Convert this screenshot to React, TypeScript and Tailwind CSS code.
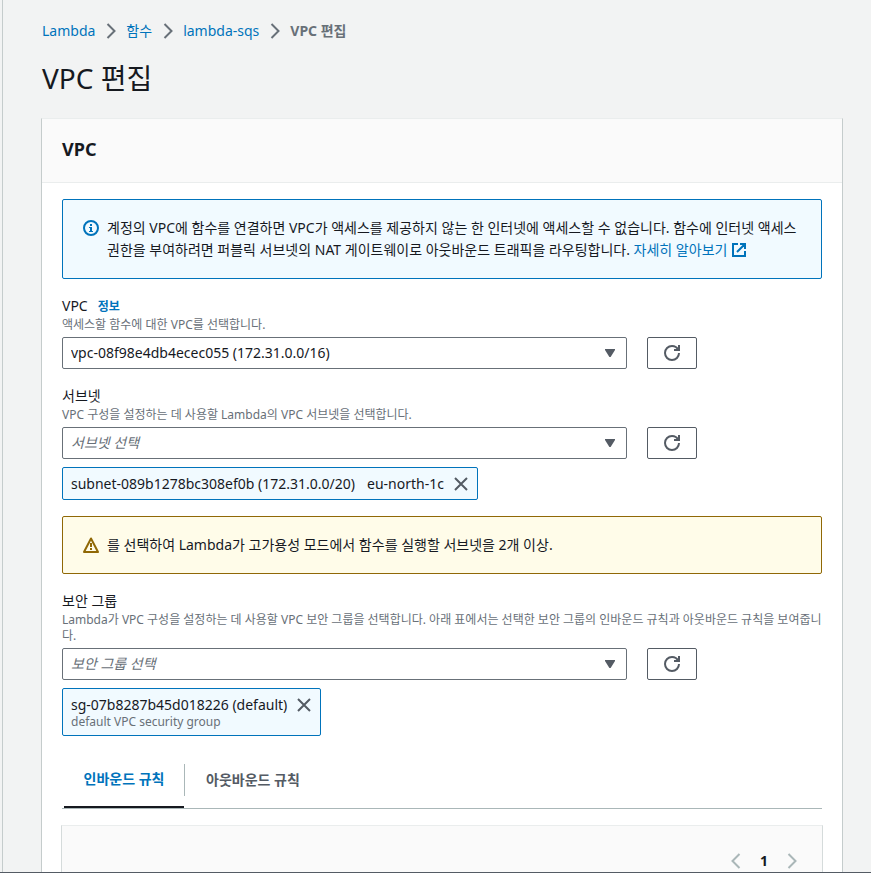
import type { ReactNode } from 'react';

function Chevron({ flip = false, className }: { flip?: boolean; className: string }) {
  return (
    <svg viewBox="0 0 16 16" className={className} fill="none" stroke="currentColor" strokeWidth="2" aria-hidden="true">
      <path d={flip ? 'M11.5 1 4.5 8l7 7' : 'M4.5 1l7 7-7 7'} />
    </svg>
  );
}

function RefreshButton({ label }: { label: string }) {
  return (
    <button
      type="button"
      aria-label={label}
      className="flex h-8 w-[50px] shrink-0 items-center justify-center rounded-xs border border-[#545b64] bg-white text-[#545b64]"
    >
      <svg viewBox="0 0 16 16" className="size-4" fill="none" stroke="currentColor" strokeWidth="2" aria-hidden="true">
        <path d="M15 8c0 3.870-3.130 7-7 7s-7-3.130-7-7 3.130-7 7-7c2.790 0 5.200 1.630 6.330 4" />
        <path d="M10 5h5V0" />
      </svg>
    </button>
  );
}

function Field({
  id,
  label,
  info,
  description,
  value,
  placeholder = false,
}: {
  id: string;
  label: string;
  info?: string;
  description: string;
  value: string;
  placeholder?: boolean;
}) {
  return (
    <div>
      <div className="flex h-5 items-start gap-2.5">
        <label htmlFor={id} className="leading-[18px]">{label}</label>
        {info && (
          <a href="#info" className="text-xs leading-5 font-bold text-[#0073bb]">
            {info}
          </a>
        )}
      </div>
      <p className="mb-1 text-xs leading-4 break-all text-[#687078]">{description}</p>
      <div className="flex gap-5">
        <div className="relative max-w-[565px] flex-1">
          <select
            id={id}
            defaultValue={value}
            className={
              placeholder
                ? 'block h-8 w-full appearance-none rounded-xs border border-[#687078] bg-white px-2 text-[#687078] italic'
                : 'block h-8 w-full appearance-none rounded-xs border border-[#687078] bg-white px-2'
            }
          >
            <option>{value}</option>
          </select>
          <svg
            viewBox="0 0 10 8"
            className="pointer-events-none absolute top-3 right-3 h-2 w-2.5 text-[#545b64]"
            fill="currentColor"
            aria-hidden="true"
          >
            <path d="M0 0h10v1L5.600 8H4.400L0 1z" />
          </svg>
        </div>
        <RefreshButton label={`${label} 새로 고침`} />
      </div>
    </div>
  );
}

function Token({ children, description }: { children: ReactNode; description?: string }) {
  return (
    <div className="mt-2 flex w-fit items-start gap-[9px] rounded-xs border border-[#0073bb] bg-[#f1faff] px-2 py-1.5 leading-[19px]">
      <div>
        <div className="flex gap-3">{children}</div>
        {description && <p className="text-xs leading-[15px] text-[#687078]">{description}</p>}
      </div>
      <button type="button" aria-label="제거" className="flex h-[19px] items-center text-[#545b64]">
        <svg viewBox="0 0 16 16" className="size-4" fill="none" stroke="currentColor" strokeWidth="2" aria-hidden="true">
          <path d="m2 2 12 12M14 2 2 14" />
        </svg>
      </button>
    </div>
  );
}

function Separator() {
  return (
    <li className="-mr-px" aria-hidden="true">
      <Chevron className="size-4 text-[#687078]" />
    </li>
  );
}

export default function App() {
  return (
    <div className="flex h-screen flex-col overflow-hidden border-b border-[#545b64] bg-[#f2f3f3] pl-0.5 font-['Noto_Sans','Noto_Sans_CJK_KR',sans-serif] text-sm text-[#16191f]">
      <main className="min-h-0 flex-1 overflow-hidden border-l border-[#c5cccc] pt-5 pr-7 pl-[38px]">
        <nav aria-label="탐색 경로">
          <ol className="flex items-center gap-2 px-px leading-[22px] text-[#0073bb]">
            <li><a href="#lambda">Lambda</a></li>
            <Separator />
            <li><a href="#functions">함수</a></li>
            <Separator />
            <li><a href="#lambda-sqs">lambda-sqs</a></li>
            <Separator />
            <li className="font-bold text-[#687078]" aria-current="page">VPC 편집</li>
          </ol>
        </nav>
        <h1 className="mt-[18px] mb-[22px] px-px text-[28px] leading-9">VPC 편집</h1>

        <section className="border border-t-[#eaeded] border-r-[#c5cccc] border-b-[#c5cccc] border-l-[#c5cccc] bg-white">
          <header className="border-b border-[#eaeded] bg-[#fafafa] px-5 pt-[15px] pb-[17px]">
            <h2 className="text-lg leading-[31px] font-bold">VPC</h2>
          </header>
          <div className="px-5 pt-4">
            <div className="flex gap-2 rounded-xs border border-[#0073bb] bg-[#f1faff] px-5 py-[17px]">
              <svg viewBox="0 0 16 16" className="mt-[3px] size-4 shrink-0 text-[#0073bb]" aria-hidden="true">
                <circle cx="8" cy="8" r="7" fill="none" stroke="currentColor" strokeWidth="2" />
                <path d="M7 4h2v2H7zM6 7h3v4h1v1H6v-1h1V8H6z" fill="currentColor" />
              </svg>
              <p className="leading-[22px]">
                계정의 VPC에 함수를 연결하면 VPC가 액세스를 제공하지 않는 한 인터넷에 액세스할 수 없습니다. 함수에 인터넷 액세스 권한을 부여하려면 퍼블릭 서브넷의 NAT 게이트웨이로 아웃바운드 트래픽을 라우팅합니다.{' '}
                <a href="#learn-more" className="inline-block whitespace-nowrap text-[#0073bb]">
                  자세히 알아보기
                  <svg viewBox="0 0 14 14" className="ml-[5px] inline size-3.5 align-[-2px]" fill="none" stroke="currentColor" strokeWidth="2" aria-hidden="true">
                    <path d="M6 1H1v12h12V8M8 1h5v5M13 1 5 9" />
                  </svg>
                </a>
              </p>
            </div>

            <div className="mt-[18px]">
              <Field
                id="vpc"
                label="VPC"
                info="정보"
                description="액세스할 함수에 대한 VPC를 선택합니다."
                value="vpc-08f98e4db4ecec055 (172.31.0.0/16)"
              />
            </div>

            <div className="mt-[18px]">
              <Field
                id="subnet"
                label="서브넷"
                description="VPC 구성을 설정하는 데 사용할 Lambda의 VPC 서브넷을 선택합니다."
                value="서브넷 선택"
                placeholder
              />
              <Token>
                <span>subnet-089b1278bc308ef0b (172.31.0.0/20)</span>
                <span>eu-north-1c</span>
              </Token>
            </div>

            <div className="mt-4 flex gap-2 rounded-xs border border-[#906806] bg-[#fffce9] px-5 py-[17px]">
              <svg viewBox="0 0 16 16" className="mt-[3px] size-4 shrink-0 text-[#906806]" aria-hidden="true">
                <path d="M8 1.500 15 15H1z" fill="none" stroke="currentColor" strokeWidth="2" strokeLinejoin="round" />
                <path d="M7 6h2v4H7zM7 11h2v2H7z" fill="currentColor" />
              </svg>
              <p className="leading-[22px]">를 선택하여 Lambda가 고가용성 모드에서 함수를 실행할 서브넷을 2개 이상.</p>
            </div>

            <div className="mt-[18px]">
              <Field
                id="security-group"
                label="보안 그룹"
                description="Lambda가 VPC 구성을 설정하는 데 사용할 VPC 보안 그룹을 선택합니다. 아래 표에서는 선택한 보안 그룹의 인바운드 규칙과 아웃바운드 규칙을 보여줍니다."
                value="보안 그룹 선택"
                placeholder
              />
              <Token description="default VPC security group">
                <span>sg-07b8287b45d018226 (default)</span>
              </Token>
            </div>

            <div role="tablist" className="mt-4 flex border-b border-[#aab7b8] pl-0.5 font-bold">
              <button type="button" role="tab" aria-selected="true" className="h-14 w-[120px] border-b-2 border-[#16191f] text-[#0073bb]">
                인바운드 규칙
              </button>
              <div className="my-3 border-l border-[#aab7b8]" />
              <button type="button" role="tab" aria-selected="false" className="h-14 px-[21px] text-[#545b64]">
                아웃바운드 규칙
              </button>
            </div>

            <div className="-mx-px mt-4 flex items-start justify-end border border-t-[#eaeded] border-r-[#d5dbdb] border-b-[#d5dbdb] border-l-[#d5dbdb] bg-[#fafafa] px-[22px] pt-6 pb-10">
              <nav aria-label="페이지" className="flex items-center gap-4 leading-[22px]">
                <button type="button" aria-label="이전 페이지" className="text-[#aab7b8]"><Chevron flip className="size-4" /></button>
                <button type="button" aria-current="page" className="font-bold">1</button>
                <button type="button" aria-label="다음 페이지" className="text-[#aab7b8]"><Chevron className="size-4" /></button>
              </nav>
            </div>
          </div>
        </section>
      </main>
    </div>
  );
}
